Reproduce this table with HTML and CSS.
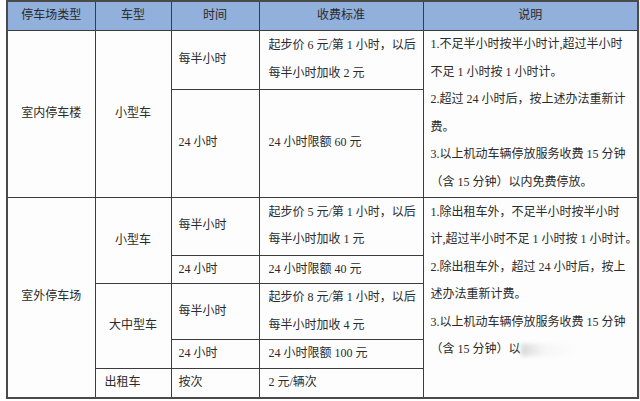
FILE: index.html
```html
<!DOCTYPE html>
<html lang="zh-CN">
<head>
<meta charset="utf-8">
<title>停车收费标准</title>
<link rel="stylesheet" href="styles.css">
</head>
<body>
<table class="fees">
  <colgroup>
    <col class="c-type">
    <col class="c-car">
    <col class="c-time">
    <col class="c-fee">
    <col class="c-note">
  </colgroup>
  <thead>
    <tr class="r-head">
      <th>停车场类型</th>
      <th>车型</th>
      <th>时间</th>
      <th>收费标准</th>
      <th>说明</th>
    </tr>
  </thead>
  <tbody>
    <tr class="r1">
      <td class="center" rowspan="2">室内停车楼</td>
      <td class="center" rowspan="2">小型车</td>
      <td class="left">每半小时</td>
      <td class="left fee">起步价 6 元/第 1 小时，以后<br>每半小时加收 2 元</td>
      <td class="note" rowspan="2">1.不足半小时按半小时计,超过半小时<br>不足 1 小时按 1 小时计。<br>2.超过 24 小时后，按上述办法重新计<br>费。<br>3.以上机动车辆停放服务收费 15 分钟<br>（含 15 分钟）以内免费停放。</td>
    </tr>
    <tr class="r2">
      <td class="left">24 小时</td>
      <td class="left fee">24 小时限额 60 元</td>
    </tr>
    <tr class="r3">
      <td class="center" rowspan="5">室外停车场</td>
      <td class="center" rowspan="2">小型车</td>
      <td class="left">每半小时</td>
      <td class="left fee">起步价 5 元/第 1 小时，以后<br>每半小时加收 1 元</td>
      <td class="note top" rowspan="5">1.除出租车外，不足半小时按半小时<br>计,超过半小时不足 1 小时按 1 小时计。<br>2.除出租车外，超过 24 小时后，按上<br>述办法重新计费。<br>3.以上机动车辆停放服务收费 15 分钟<br>（含 15 分钟）以<span class="smear"></span></td>
    </tr>
    <tr class="r4">
      <td class="left">24 小时</td>
      <td class="left fee">24 小时限额 40 元</td>
    </tr>
    <tr class="r5">
      <td class="center" rowspan="2">大中型车</td>
      <td class="left">每半小时</td>
      <td class="left fee">起步价 8 元/第 1 小时，以后<br>每半小时加收 4 元</td>
    </tr>
    <tr class="r6">
      <td class="left">24 小时</td>
      <td class="left fee">24 小时限额 100 元</td>
    </tr>
    <tr class="r7">
      <td class="left taxi">出租车</td>
      <td class="left">按次</td>
      <td class="left fee">2 元/辆次</td>
    </tr>
  </tbody>
</table>
</body>
</html>
```

FILE: styles.css
```css
html, body {
  margin: 0;
  padding: 0;
  background: #ffffff;
}

body {
  font-family: "Liberation Serif", "Noto Sans CJK SC", serif;
  font-size: 12px;
  color: #2a2a2a;
}

.fees {
  margin: 0 0 0 6px;
  border-collapse: collapse;
  table-layout: fixed;
  width: 631px;
  border: 2px solid #4a4a4a;
  box-shadow: 1px 2px 2px rgba(0, 0, 0, 0.12);
}

.c-type { width: 88px; }
.c-car { width: 76px; }
.c-time { width: 88px; }
.c-fee { width: 164px; }
.c-note { width: 215px; }

.fees th,
.fees td {
  border: 1px solid #3c3c3c;
  padding: 0;
  line-height: 27.5px;
  white-space: nowrap;
  vertical-align: middle;
  overflow: hidden;
}

.fees th {
  background: #92b0dc;
  font-weight: normal;
  color: #2b2b2b;
  text-align: center;
}

.fees td {
  background: #fdfdfe;
}

.r-head { height: 28px; }
.r1 { height: 59px; }
.r2 { height: 108px; }
.r3 { height: 58px; }
.r4 { height: 28px; }
.r5 { height: 56px; }
.r6 { height: 29px; }
.r7 { height: 27px; }

.center { text-align: center; }

.left {
  text-align: left;
  padding-left: 7px !important;
}

.fee { padding-left: 9px !important; }

.taxi { padding-left: 9px !important; }

.note {
  text-align: left;
  padding-left: 7px !important;
}

.note.top {
  vertical-align: top;
  padding-top: 1px !important;
}

.smear {
  display: inline-block;
  width: 60px;
  height: 12px;
  vertical-align: middle;
  background: linear-gradient(90deg, rgba(200, 200, 200, 0.7), rgba(235, 235, 235, 0.3) 40%, rgba(255, 255, 255, 0));
  filter: blur(2px);
}
```
